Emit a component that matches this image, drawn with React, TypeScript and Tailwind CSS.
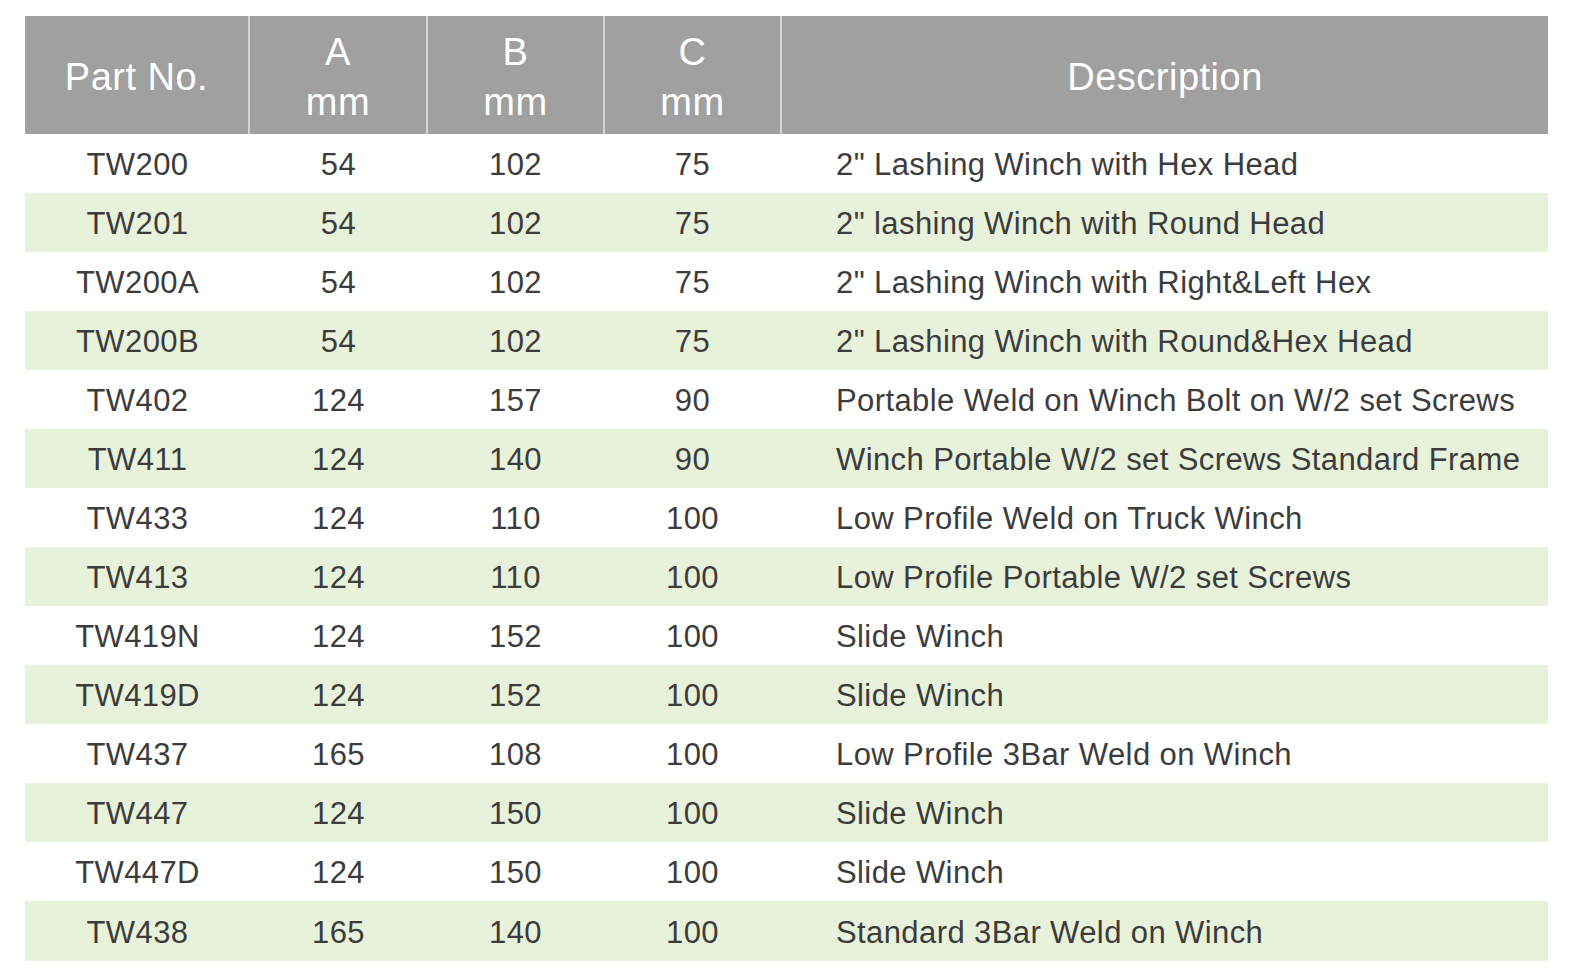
import React from "react";

const rows: [string, string, string, string, string][] = [
  ["TW200", "54", "102", "75", '2" Lashing Winch with Hex Head'],
  ["TW201", "54", "102", "75", '2" lashing Winch with Round Head'],
  ["TW200A", "54", "102", "75", '2" Lashing Winch with Right&Left Hex'],
  ["TW200B", "54", "102", "75", '2" Lashing Winch with Round&Hex Head'],
  ["TW402", "124", "157", "90", "Portable Weld on Winch Bolt on W/2 set Screws"],
  ["TW411", "124", "140", "90", "Winch Portable W/2 set Screws Standard Frame"],
  ["TW433", "124", "110", "100", "Low Profile Weld on Truck Winch"],
  ["TW413", "124", "110", "100", "Low Profile Portable W/2 set Screws"],
  ["TW419N", "124", "152", "100", "Slide Winch"],
  ["TW419D", "124", "152", "100", "Slide Winch"],
  ["TW437", "165", "108", "100", "Low Profile 3Bar Weld on Winch"],
  ["TW447", "124", "150", "100", "Slide Winch"],
  ["TW447D", "124", "150", "100", "Slide Winch"],
  ["TW438", "165", "140", "100", "Standard 3Bar Weld on Winch"],
];

export default function App() {
  return (
    <div
      className="w-[1575px] h-[974px] bg-white pt-[16px] pl-[25px]"
      style={{ fontFamily: '"Liberation Sans", Arial, sans-serif' }}
    >
      <div className="w-[1523px]">
        <div className="flex h-[118px] bg-[#a0a0a0] text-white text-[38px] tracking-[0.5px] leading-[50px]">
          <div className="w-[223px] flex items-center justify-center pt-[4px]">Part No.</div>
          <div className="w-[2px] bg-[#d4d4d4]" />
          <div className="w-[176px] flex flex-col items-center justify-center pt-[3px]">
            <span>A</span>
            <span>mm</span>
          </div>
          <div className="w-[2px] bg-[#d4d4d4]" />
          <div className="w-[175px] flex flex-col items-center justify-center pt-[3px]">
            <span>B</span>
            <span>mm</span>
          </div>
          <div className="w-[2px] bg-[#d4d4d4]" />
          <div className="w-[175px] flex flex-col items-center justify-center pt-[3px]">
            <span>C</span>
            <span>mm</span>
          </div>
          <div className="w-[2px] bg-[#d4d4d4]" />
          <div className="flex-1 flex items-center justify-center pt-[4px]">Description</div>
        </div>
        {rows.map((r, i) => (
          <div
            key={i}
            className={
              "flex items-center pt-[4px] text-[31px] tracking-[0.4px] text-[#3c3c3c] " +
              (i === rows.length - 1 ? "h-[60px] " : "h-[59px] ") +
              (i % 2 === 1 ? "bg-[#e8f1da]" : "bg-white")
            }
          >
            <div className="w-[225px] text-center">{r[0]}</div>
            <div className="w-[177px] text-center">{r[1]}</div>
            <div className="w-[177px] text-center">{r[2]}</div>
            <div className="w-[177px] text-center">{r[3]}</div>
            <div className="flex-1 pl-[55px] whitespace-nowrap">{r[4]}</div>
          </div>
        ))}
      </div>
    </div>
  );
}
